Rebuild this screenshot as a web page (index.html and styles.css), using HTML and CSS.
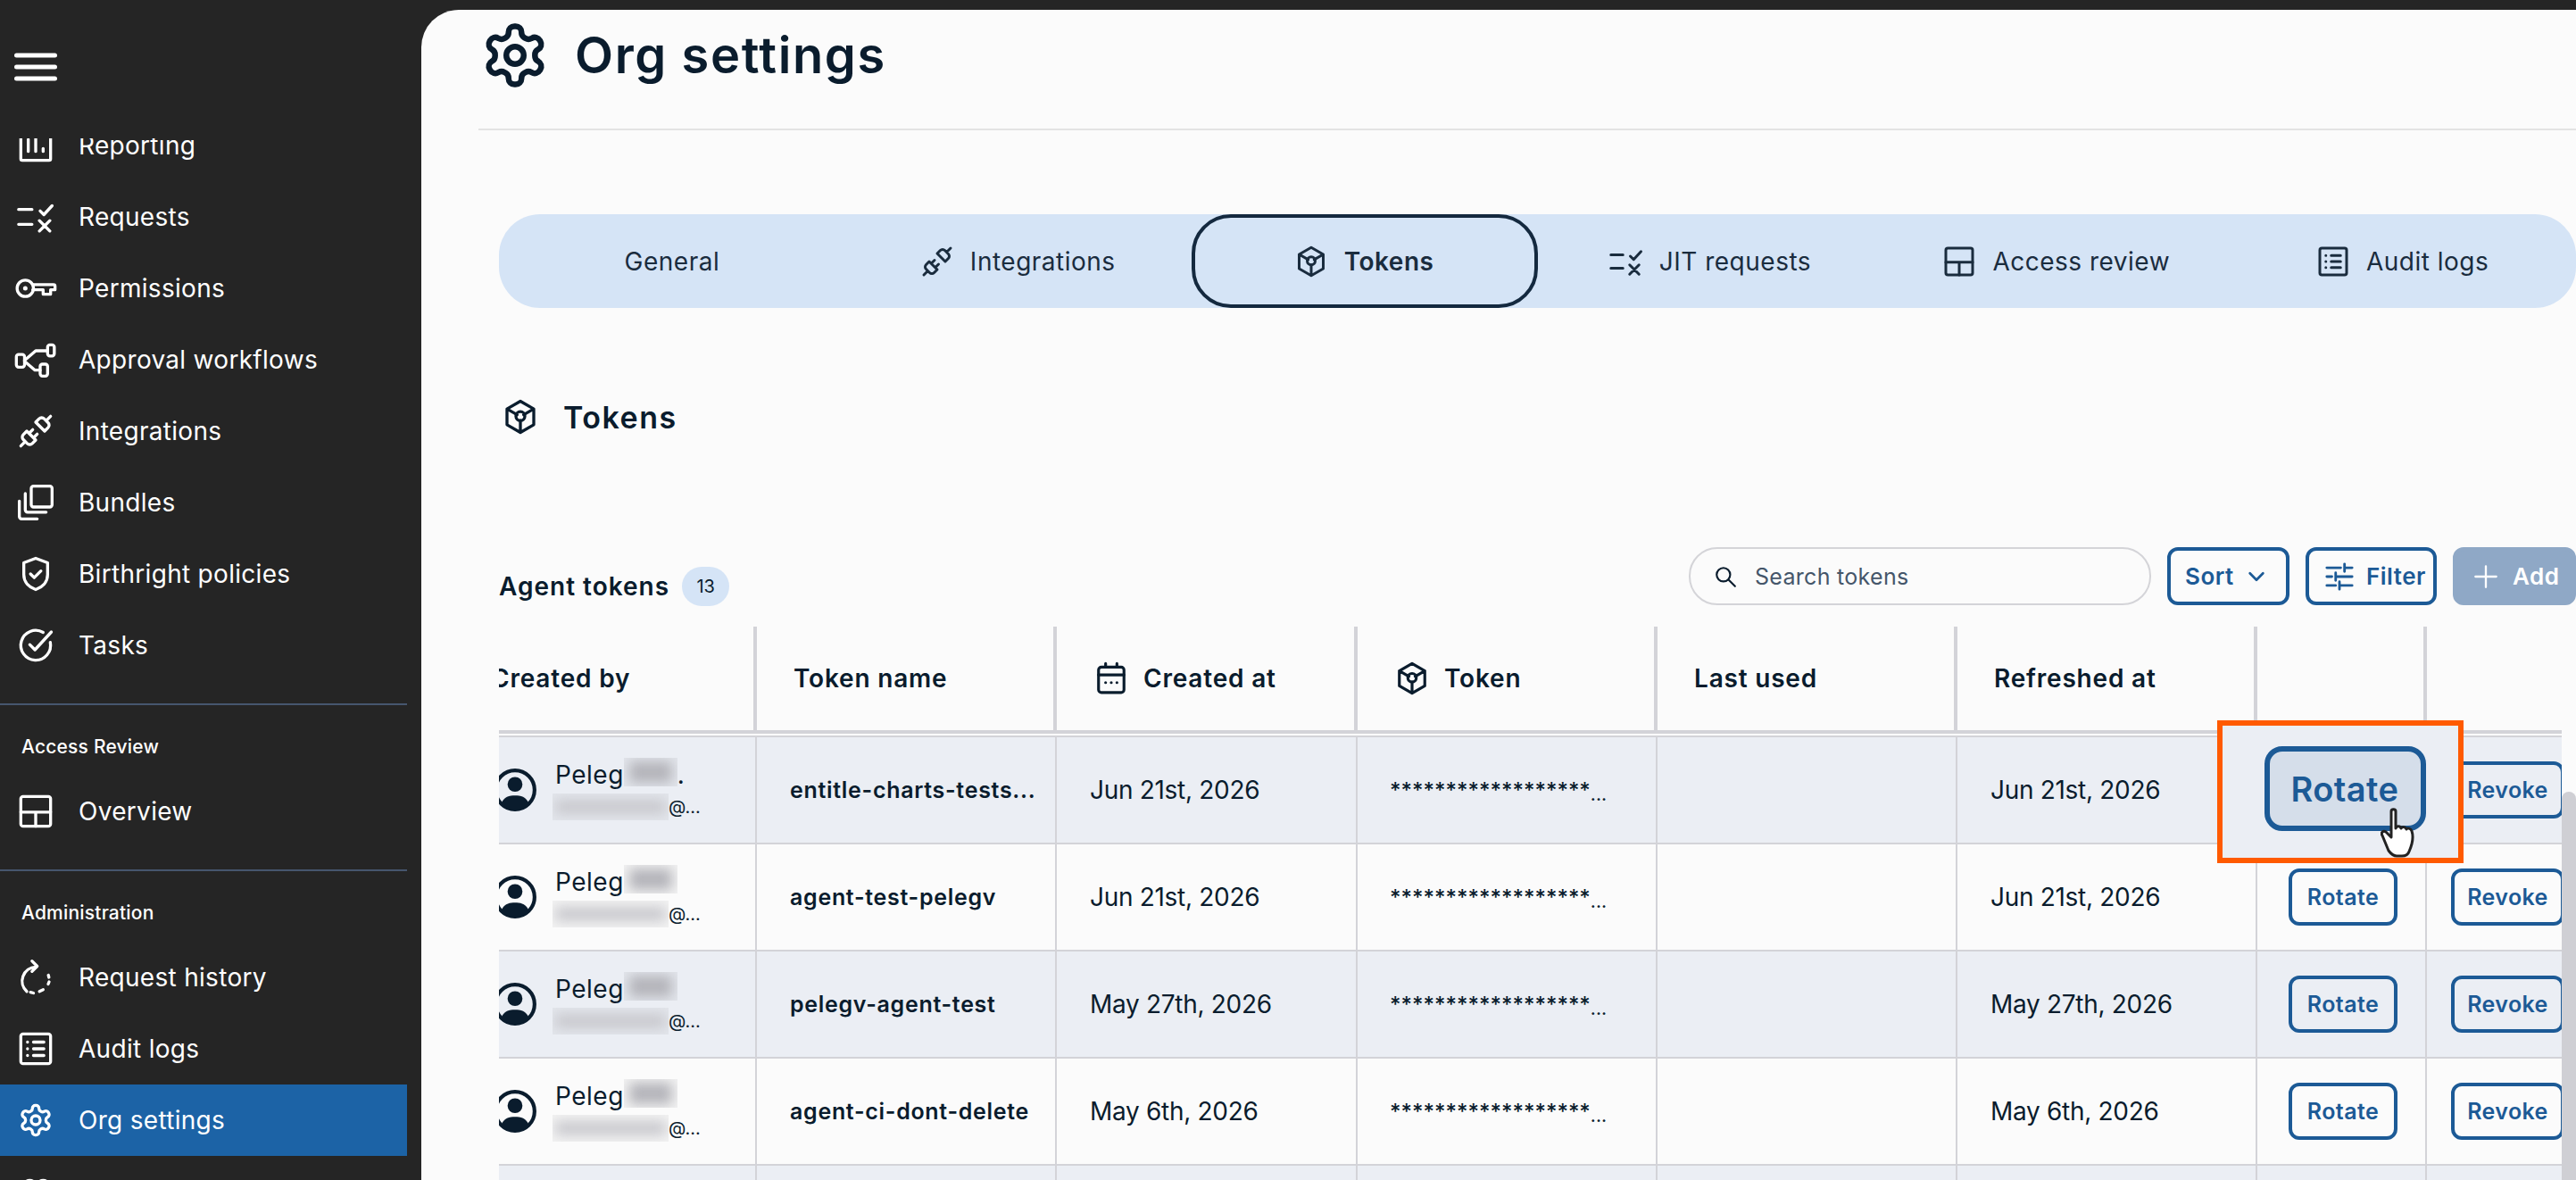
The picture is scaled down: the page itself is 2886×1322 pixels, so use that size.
FILE: index.html
```html
<!DOCTYPE html>
<html lang="en">
<head>
    <meta charset="UTF-8">
    <meta name="viewport" content="width=device-width, initial-scale=1.0">
    <title>Org settings</title>
    <link rel="stylesheet" href="styles.css">
</head>
<body>
    <!-- icon sprite, used through <use> below -->
    <svg class="sprite" xmlns="http://www.w3.org/2000/svg">
        <symbol id="i-report" viewBox="0 0 24 24"><path d="M2 2v19a1 1 0 0 0 1 1h18a1 1 0 0 0 1-1V2M7 8v8M12 5v11M17 14v2"/></symbol>
        <symbol id="i-requests" viewBox="0 0 24 24"><path d="M0.5 7h9M0.5 17h9M15 8l2.5 2.500 5.500-6M14.500 14.500l7 7M21.500 14.500l-7 7"/></symbol>
        <symbol id="i-key" viewBox="0 0 24 24"><circle cx="5" cy="12" r="5.500"/><circle class="solid" cx="5" cy="12" r="1.500"/><path d="M10 9.500h14a1 1 0 0 1 1 1v2.500h-3v3h-5v-3h-7"/></symbol>
        <symbol id="i-flow" viewBox="0 0 24 24"><rect x="-1" y="8.500" width="5.500" height="8.500" rx="1.500"/><rect x="20" y="2" width="4.500" height="7.500" rx="1.500"/><rect x="15" y="15" width="5" height="8" rx="1.500"/><path d="M4.500 12.500L12 6h8M4.500 13L11.500 19H15"/></symbol>
        <symbol id="i-plug" viewBox="0 0 24 24"><path d="M19 5l3-3M2 22l3-3M6.300 20.300a2.400 2.400 0 0 0 3.400 0L12 18l-6-6-2.300 2.300a2.400 2.400 0 0 0 0 3.400ZM7.500 13.500L10 11M10.500 16.500L13 14M12 6l6 6 2.300-2.300a2.400 2.400 0 0 0 0-3.400l-2.600-2.600a2.400 2.400 0 0 0-3.400 0Z"/></symbol>
        <symbol id="i-bundle" viewBox="0 0 24 24"><rect x="9" y="1" width="14" height="14" rx="1.500"/><path d="M5 6v11a1.500 1.500 0 0 0 1.500 1.500H19M1 11v10.500A1.500 1.500 0 0 0 2.500 23H13"/></symbol>
        <symbol id="i-shield" viewBox="0 0 24 24"><path d="M12 1.500l8 3v8c0 5-3.500 8.500-8 10-4.500-1.500-8-5-8-10v-8zM8.500 12l2.500 2.500 4.500-4.500"/></symbol>
        <symbol id="i-tasks" viewBox="0 0 24 24"><path d="M21.800 10A10 10 0 1 1 17 3.300M8 11.500l3.500 3.500L22.500 3"/></symbol>
        <symbol id="i-layout" viewBox="0 0 24 24"><rect x="2" y="2" width="20" height="20" rx="1.500"/><path d="M2 12.500h20M12 12.500V22"/></symbol>
        <symbol id="i-history" viewBox="0 0 24 24"><path d="M12 5a9.500 9.500 0 0 0-6 16.500M9.500 1l3.500 3.500-3.500 3.500M20.500 10.500l.4 1.500M21 15l-.6 1.500M14.500 21.500l2.500-1.200M8.500 22l2 .5"/></symbol>
        <symbol id="i-audit" viewBox="0 0 24 24"><rect x="2" y="2" width="20" height="20" rx="1.500"/><path d="M6.500 7.500h.01M6.500 12h.01M6.500 16.500h.01M10.500 7.500h7M10.500 12h7M10.500 16.500h7"/></symbol>
        <symbol id="i-gear" viewBox="0 0 24 24"><path d="M12.220 2h-.44a2 2 0 0 0-2 2v.18a2 2 0 0 1-1 1.730l-.43.250a2 2 0 0 1-2 0l-.15-.08a2 2 0 0 0-2.730.730l-.22.380a2 2 0 0 0 .730 2.730l.15.100a2 2 0 0 1 1 1.720v.510a2 2 0 0 1-1 1.740l-.15.090a2 2 0 0 0-.730 2.730l.22.380a2 2 0 0 0 2.730.730l.15-.08a2 2 0 0 1 2 0l.43.250a2 2 0 0 1 1 1.730V20a2 2 0 0 0 2 2h.44a2 2 0 0 0 2-2v-.18a2 2 0 0 1 1-1.730l.43-.25a2 2 0 0 1 2 0l.15.08a2 2 0 0 0 2.730-.73l.22-.39a2 2 0 0 0-.73-2.730l-.15-.08a2 2 0 0 1-1-1.740v-.5a2 2 0 0 1 1-1.740l.15-.09a2 2 0 0 0 .73-2.730l-.22-.38a2 2 0 0 0-2.730-.73l-.15.08a2 2 0 0 1-2 0l-.43-.25a2 2 0 0 1-1-1.730V4a2 2 0 0 0-2-2z"/><circle cx="12" cy="12" r="3"/></symbol>
        <symbol id="i-token" viewBox="0 0 24 24"><path d="M12 1.500l9 5.200v10.600l-9 5.200-9-5.200V6.700zM3 6.700l6.800 3.900M21 6.700l-6.800 3.900M12 14.500v8"/><circle cx="12" cy="11.500" r="3"/></symbol>
        <symbol id="i-calendar" viewBox="0 0 24 24"><rect x="3" y="4" width="18" height="18" rx="2"/><path d="M3 9.500h18M8 1.500V4M16 1.500V4M8 15h.01M12 15h.01M16 15h.01"/></symbol>
        <symbol id="i-search" viewBox="0 0 24 24"><circle cx="10" cy="10" r="7"/><path d="M15.500 15.500L22 22"/></symbol>
        <symbol id="i-chevron" viewBox="0 0 24 24"><path d="M4 8l8 8 8-8"/></symbol>
        <symbol id="i-sliders" viewBox="0 0 24 24"><path d="M2 5h11M16 5h6M16 2v6M2 12h4M9 12h13M9 9v6M2 19h7M12 19h10M12 16v6"/></symbol>
        <symbol id="i-plus" viewBox="0 0 24 24"><path d="M12 2v20M2 12h20"/></symbol>
        <symbol id="i-user" viewBox="0 0 24 24"><circle cx="12" cy="12" r="10.500"/><circle class="solid" cx="12" cy="9" r="4"/><path class="solid" d="M4.500 19.500C6 15.500 9 15 12 15s6 .5 7.500 4.500A10.500 10.500 0 0 1 4.500 19.500z"/></symbol>
        <symbol id="i-users" viewBox="0 0 24 24"><circle cx="8" cy="9" r="4.500"/><circle cx="17" cy="9" r="4.500"/></symbol>
    </svg>

    <aside class="sidebar">
        <div class="burger">
            <svg class="burger-icon" viewBox="0 0 48 32"><path d="M2.500 3h43M2.500 16h43M2.500 29h43"/></svg>
        </div>
        <nav class="nav-scroll">
            <div class="nav-inner">
                <ul class="nav-list">
                    <li class="nav-item"><svg class="icon"><use href="#i-report"/></svg>Reporting</li>
                    <li class="nav-item"><svg class="icon"><use href="#i-requests"/></svg>Requests</li>
                    <li class="nav-item"><svg class="icon"><use href="#i-key"/></svg>Permissions</li>
                    <li class="nav-item"><svg class="icon"><use href="#i-flow"/></svg>Approval workflows</li>
                    <li class="nav-item"><svg class="icon"><use href="#i-plug"/></svg>Integrations</li>
                    <li class="nav-item"><svg class="icon"><use href="#i-bundle"/></svg>Bundles</li>
                    <li class="nav-item"><svg class="icon"><use href="#i-shield"/></svg>Birthright policies</li>
                    <li class="nav-item"><svg class="icon"><use href="#i-tasks"/></svg>Tasks</li>
                </ul>
                <div class="nav-group">
                    <h4 class="nav-title">Access Review</h4>
                    <ul class="nav-list">
                        <li class="nav-item"><svg class="icon"><use href="#i-layout"/></svg>Overview</li>
                    </ul>
                </div>
                <div class="nav-group">
                    <h4 class="nav-title">Administration</h4>
                    <ul class="nav-list">
                        <li class="nav-item"><svg class="icon"><use href="#i-history"/></svg>Request history</li>
                        <li class="nav-item"><svg class="icon"><use href="#i-audit"/></svg>Audit logs</li>
                        <li class="nav-item active"><svg class="icon"><use href="#i-gear"/></svg>Org settings</li>
                        <li class="nav-item"><svg class="icon"><use href="#i-users"/></svg></li>
                    </ul>
                </div>
            </div>
        </nav>
    </aside>

    <main class="main">
        <header class="page-head">
            <svg class="icon page-icon"><use href="#i-gear"/></svg>
            <h1 class="page-title">Org settings</h1>
        </header>

        <div class="content">
            <div class="tabs">
                <div class="tab">General</div>
                <div class="tab"><svg class="icon tab-icon"><use href="#i-plug"/></svg>Integrations</div>
                <div class="tab active"><svg class="icon tab-icon"><use href="#i-token"/></svg>Tokens</div>
                <div class="tab"><svg class="icon tab-icon"><use href="#i-requests"/></svg>JIT requests</div>
                <div class="tab"><svg class="icon tab-icon"><use href="#i-layout"/></svg>Access review</div>
                <div class="tab"><svg class="icon tab-icon"><use href="#i-audit"/></svg>Audit logs</div>
            </div>

            <h2 class="section-title"><svg class="icon section-icon"><use href="#i-token"/></svg>Tokens</h2>

            <div class="toolbar">
                <div class="toolbar-left">
                    <span class="toolbar-title">Agent tokens</span>
                    <span class="count">13</span>
                </div>
                <div class="search"><svg class="icon search-icon"><use href="#i-search"/></svg>Search tokens</div>
                <button class="btn btn-sort">Sort<svg class="icon btn-chevron"><use href="#i-chevron"/></svg></button>
                <button class="btn btn-filter"><svg class="icon btn-icon"><use href="#i-sliders"/></svg>Filter</button>
                <button class="btn btn-add"><svg class="icon btn-plus"><use href="#i-plus"/></svg>Add</button>
            </div>

            <div class="table-clip">
                <div class="table">
                    <div class="row head">
                        <div class="cell"><span class="creator-head">Created by</span></div>
                        <div class="cell">Token name</div>
                        <div class="cell"><svg class="icon th-icon"><use href="#i-calendar"/></svg>Created at</div>
                        <div class="cell"><svg class="icon th-icon"><use href="#i-token"/></svg>Token</div>
                        <div class="cell">Last used</div>
                        <div class="cell">Refreshed at</div>
                        <div class="cell"></div>
                        <div class="cell"></div>
                    </div>

                    <div class="row tint first">
                        <div class="cell user"><svg class="icon avatar"><use href="#i-user"/></svg>
                            <div class="user-text">
                                <div class="user-name">Peleg<span class="blur name-blur"></span>.</div>
                                <div class="user-mail"><span class="blur mail-blur"></span>@...</div>
                            </div>
                        </div>
                        <div class="cell token-name">entitle-charts-tests...</div>
                        <div class="cell date">Jun 21st, 2026</div>
                        <div class="cell secret">******************<span class="dots">...</span></div>
                        <div class="cell"></div>
                        <div class="cell date">Jun 21st, 2026</div>
                        <div class="cell action"></div>
                        <div class="cell action"><button class="btn-row">Revoke</button></div>
                    </div>

                    <div class="row">
                        <div class="cell user"><svg class="icon avatar"><use href="#i-user"/></svg>
                            <div class="user-text">
                                <div class="user-name">Peleg<span class="blur name-blur"></span></div>
                                <div class="user-mail"><span class="blur mail-blur"></span>@...</div>
                            </div>
                        </div>
                        <div class="cell token-name">agent-test-pelegv</div>
                        <div class="cell date">Jun 21st, 2026</div>
                        <div class="cell secret">******************<span class="dots">...</span></div>
                        <div class="cell"></div>
                        <div class="cell date">Jun 21st, 2026</div>
                        <div class="cell action"><button class="btn-row">Rotate</button></div>
                        <div class="cell action"><button class="btn-row">Revoke</button></div>
                    </div>

                    <div class="row tint">
                        <div class="cell user"><svg class="icon avatar"><use href="#i-user"/></svg>
                            <div class="user-text">
                                <div class="user-name">Peleg<span class="blur name-blur"></span></div>
                                <div class="user-mail"><span class="blur mail-blur"></span>@...</div>
                            </div>
                        </div>
                        <div class="cell token-name">pelegv-agent-test</div>
                        <div class="cell date">May 27th, 2026</div>
                        <div class="cell secret">******************<span class="dots">...</span></div>
                        <div class="cell"></div>
                        <div class="cell date">May 27th, 2026</div>
                        <div class="cell action"><button class="btn-row">Rotate</button></div>
                        <div class="cell action"><button class="btn-row">Revoke</button></div>
                    </div>

                    <div class="row">
                        <div class="cell user"><svg class="icon avatar"><use href="#i-user"/></svg>
                            <div class="user-text">
                                <div class="user-name">Peleg<span class="blur name-blur"></span></div>
                                <div class="user-mail"><span class="blur mail-blur"></span>@...</div>
                            </div>
                        </div>
                        <div class="cell token-name">agent-ci-dont-delete</div>
                        <div class="cell date">May 6th, 2026</div>
                        <div class="cell secret">******************<span class="dots">...</span></div>
                        <div class="cell"></div>
                        <div class="cell date">May 6th, 2026</div>
                        <div class="cell action"><button class="btn-row">Rotate</button></div>
                        <div class="cell action"><button class="btn-row">Revoke</button></div>
                    </div>

                    <div class="row tint">
                        <div class="cell"></div>
                        <div class="cell"></div>
                        <div class="cell"></div>
                        <div class="cell"></div>
                        <div class="cell"></div>
                        <div class="cell"></div>
                        <div class="cell"></div>
                        <div class="cell"></div>
                    </div>
                </div>
            </div>

            <div class="scrollbar"></div>

            <!-- orange callout over the first Rotate button -->
            <div class="callout">
                <button class="btn-big">Rotate</button>
                <svg class="hand" viewBox="0 0 44 56">
                    <path d="M12 4c0-3 5-3 5 0v19c1-3 5-3 6 0 1-2 5-2 6 1 1-2 5-1 6 2 2 6 1 14-3 23-1 3-4 5-8 5h-6c-4 0-6-2-9-6L2 31c-2-3 1-6 4-4l6 6z"/>
                </svg>
            </div>
        </div>
    </main>
</body>
</html>
```

FILE: styles.css
```css
* {
    box-sizing: border-box;
}

html,
body {
    height: 100%;
}

body {
    margin: 0;
    display: flex;
    overflow: hidden;
    background-color: #252525;
    font-family: Inter, "Open Sans", Arial, sans-serif;
    color: #0a1c2d;
}

button {
    font-family: inherit;
    cursor: pointer;
}

.sprite {
    display: none;
}

symbol {
    overflow: visible;
}

.icon {
    flex: none;
    width: 40px;
    height: 40px;
    fill: none;
    stroke: currentColor;
    stroke-width: 2;
    stroke-linecap: round;
    stroke-linejoin: round;
    overflow: visible;
}

.solid {
    fill: currentColor;
    stroke: none;
}

/* sidebar */
.sidebar {
    flex: none;
    width: 472px;
    height: 1322px;
    display: flex;
    flex-direction: column;
    color: #fff;
}

.burger {
    flex: none;
    height: 155px;
    padding: 59px 0 0 16px;
}

.burger-icon {
    display: block;
    width: 48px;
    height: 32px;
    fill: none;
    stroke: #fff;
    stroke-width: 5;
    stroke-linecap: round;
}

.nav-scroll {
    flex: 1;
    overflow: hidden;
}

.nav-inner {
    width: 456px;
    margin-top: -32px;
}

.nav-list {
    list-style: none;
    margin: 0;
    padding: 0;
}

.nav-item {
    display: flex;
    align-items: center;
    gap: 28px;
    height: 80px;
    padding-left: 20px;
    font-size: 28px;
    letter-spacing: 0.3px;
}

.nav-item.active {
    background-color: #1c63a6;
}

.nav-group {
    border-top: 2px solid #46566e;
    margin-top: 25px;
}

.nav-title {
    margin: 0;
    padding: 34px 0 19px 24px;
    font-size: 21px;
    line-height: 26px;
    font-weight: 500;
    letter-spacing: 0.2px;
}

/* main panel */
.main {
    flex: 1;
    min-width: 0;
    height: 1311px;
    margin-top: 11px;
    background-color: #fbfbfb;
    border-top-left-radius: 42px;
    overflow: hidden;
}

.page-head {
    display: flex;
    align-items: center;
    gap: 28px;
    height: 135px;
    margin-left: 64px;
    padding: 0 0 32px 2px;
    border-bottom: 2px solid #e3e3e3;
}

.page-icon {
    width: 78px;
    height: 78px;
    color: #0a1c2d;
}

.page-title {
    margin: 0;
    font-size: 56px;
    font-weight: 600;
    letter-spacing: 1.600px;
}

.content {
    position: relative;
    padding-left: 87px;
}

.tabs {
    display: grid;
    grid-template-columns: repeat(6, 1fr);
    height: 105px;
    margin-top: 94px;
    background-color: #d5e4f6;
    border-radius: 46px;
}

.tab {
    display: flex;
    align-items: center;
    justify-content: center;
    gap: 19px;
    font-size: 28px;
    letter-spacing: 0.5px;
    color: #1a2c3e;
}

.tab.active {
    border: 4px solid #14293f;
    border-radius: 44px;
    font-weight: 600;
}

.tab-icon {
    width: 36px;
    height: 36px;
}

.section-title {
    display: flex;
    align-items: center;
    gap: 28px;
    margin: 97px 0 0 4px;
    height: 50px;
    font-size: 34px;
    font-weight: 600;
    letter-spacing: 1.500px;
}

.toolbar {
    display: flex;
    align-items: center;
    gap: 18px;
    margin-top: 121px;
    height: 65px;
}

.toolbar-left {
    display: flex;
    align-items: center;
    flex: none;
    width: 1315px;
    gap: 14px;
    padding-top: 22px;
}

.toolbar-title {
    font-size: 28px;
    font-weight: 600;
    letter-spacing: 1px;
}

.count {
    display: flex;
    align-items: center;
    justify-content: center;
    width: 53px;
    height: 44px;
    border-radius: 22px;
    background-color: #d5e4f6;
    font-size: 20px;
}

.search {
    flex: none;
    display: flex;
    align-items: center;
    gap: 20px;
    width: 518px;
    height: 65px;
    padding-left: 26px;
    border: 2px solid #d4d4d8;
    border-radius: 32px;
    color: #45566a;
    font-size: 25px;
    letter-spacing: 0.3px;
}

.search-icon {
    width: 26px;
    height: 26px;
    color: #0a1c2d;
}

.btn {
    flex: none;
    display: flex;
    align-items: center;
    height: 65px;
    border: 4px solid #1c5a96;
    border-radius: 12px;
    background: none;
    color: #1c5a96;
    font-size: 26px;
    font-weight: 600;
    letter-spacing: 0.5px;
}

.btn-sort {
    width: 137px;
    padding: 0 0 0 16px;
    gap: 14px;
}

.btn-filter {
    width: 147px;
    padding: 0 0 0 17px;
    gap: 13px;
}

.btn-add {
    width: 138px;
    padding: 0 0 0 19px;
    gap: 16px;
    border-color: #8fa8c6;
    background-color: #8fa8c6;
    color: #fff;
}

.btn-chevron {
    width: 22px;
    height: 22px;
    stroke-width: 3;
}

.btn-icon {
    width: 34px;
    height: 34px;
}

.btn-plus {
    width: 28px;
    height: 28px;
}

/* table, scrolled a little to the right inside its clip */
.table-clip {
    width: 2311px;
    height: 620px;
    margin-top: 24px;
    overflow: hidden;
}

.table {
    width: 2360px;
    margin-left: -47px;
}

.row {
    display: grid;
    grid-template-columns: 336px 336px 337px 336px 336px 336px 190px 153px;
    height: 120px;
    border-bottom: 2px solid #d3d3d8;
}

.row.tint {
    background-color: #ebeef4;
}

.row.first {
    height: 122px;
    margin-top: 2px;
    border-top: 2px solid #d3d3d8;
}

.row.head {
    height: 120px;
    border-bottom: 4px solid #d3d3d8;
}

.cell {
    display: flex;
    align-items: center;
    border-right: 2px solid #d3d3d8;
    min-width: 0;
    font-size: 28px;
}

.head .cell {
    border-right-width: 4px;
    padding-left: 41px;
    font-weight: 600;
    font-size: 28px;
    letter-spacing: 0.8px;
}

.row .cell:last-child {
    border-right: 0;
}

.th-icon {
    width: 38px;
    height: 38px;
    margin: 0 17px 0 1px;
}

.creator-head {
    margin-left: -3px;
}

.user {
    padding-left: 43px;
    gap: 20px;
}

.avatar {
    width: 50px;
    height: 50px;
    margin-left: -3px;
}

.user-text {
    display: flex;
    flex-direction: column;
    gap: 2px;
    position: relative;
    top: -1px;
}

.user-name {
    display: flex;
    font-size: 28px;
    line-height: 38px;
    letter-spacing: 0.5px;
}

.user-mail {
    display: flex;
    align-items: center;
    font-size: 20px;
    line-height: 30px;
}

/* redacted text in the reference: soft gray smudge in a faint box */
.blur {
    display: block;
    overflow: hidden;
    position: relative;
    background-color: rgba(0, 0, 0, 0.03);
}

.blur::before {
    content: "";
    position: absolute;
    background-color: #b4b4ba;
    filter: blur(7px);
}

.name-blur {
    width: 60px;
    height: 32px;
}

.name-blur::before {
    inset: 4px 6px;
}

.mail-blur {
    width: 130px;
    height: 30px;
    margin-left: -3px;
}

.mail-blur::before {
    inset: 7px 3px;
    background-color: #c8c8cd;
}

.token-name {
    padding-left: 37px;
    font-weight: 600;
    font-size: 25px;
    letter-spacing: 0.7px;
}

.date {
    padding-left: 37px;
    letter-spacing: -0.3px;
}

.secret {
    padding-left: 36px;
    font-weight: 500;
    font-size: 24px;
}

.dots {
    font-size: 20px;
    align-self: center;
    padding-top: 10px;
}

.action {
    justify-content: center;
    padding-left: 4px;
}

.row .action:last-child {
    justify-content: flex-start;
    padding-left: 27px;
}

.btn-row {
    flex: none;
    width: 122px;
    height: 64px;
    border: 4px solid #1c5a96;
    border-radius: 12px;
    background: none;
    color: #1c5a96;
    font-size: 25px;
    font-weight: 600;
    letter-spacing: 0.4px;
}

.action:last-child .btn-row {
    width: 127px;
}

.scrollbar {
    position: absolute;
    top: 647px;
    right: 0;
    width: 16px;
    height: 600px;
    border-radius: 8px;
    background-color: #cfcfd4;
}

.callout {
    position: absolute;
    left: 2012px;
    top: 567px;
    display: flex;
    align-items: center;
    justify-content: center;
    width: 276px;
    height: 160px;
    padding: 0 0 7px 10px;
    border: 6px solid #ff5a00;
    background-color: #ebeef4;
}

.btn-big {
    width: 181px;
    height: 95px;
    border: 6px solid #1c5a96;
    border-radius: 20px;
    background-color: #d5deea;
    color: #1c5a96;
    font-size: 38px;
    font-weight: 600;
    letter-spacing: 0.4px;
}

.hand {
    position: absolute;
    left: 177px;
    top: 92px;
    width: 44px;
    height: 56px;
    fill: #fff;
    stroke: #222;
    stroke-width: 3;
    stroke-linejoin: round;
}
```
